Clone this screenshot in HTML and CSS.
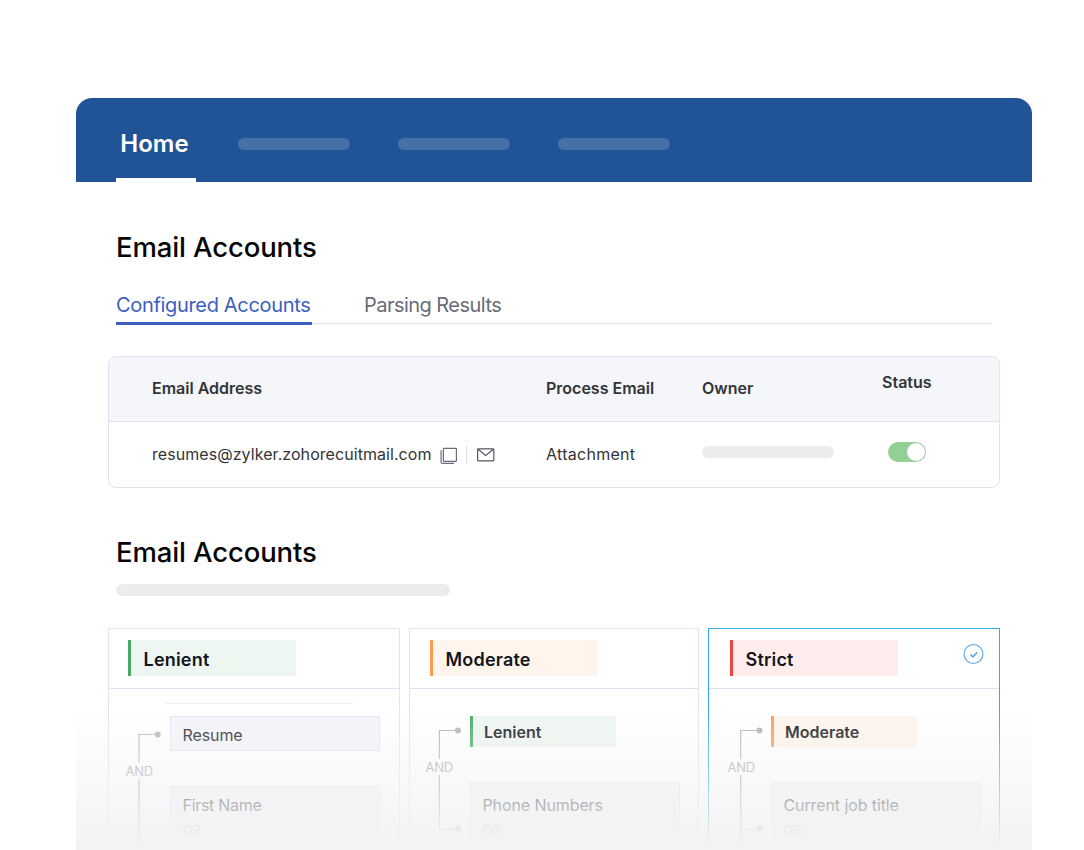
FILE: index.html
```html
<!DOCTYPE html>
<html lang="en">
<head>
  <meta charset="UTF-8">
  <title>Email Accounts</title>
  <link rel="stylesheet" href="styles.css">
</head>
<body>

<div class="window">
  <nav class="navbar">
    <a class="nav-item">Home</a>
    <span class="nav-bar"></span>
    <span class="nav-bar"></span>
    <span class="nav-bar"></span>
  </nav>

  <main class="content">
    <h1 class="title">Email Accounts</h1>

    <div class="tabs">
      <a class="tab active">Configured Accounts</a>
      <a class="tab parsing">Parsing Results</a>
    </div>

    <div class="table">
      <div class="row head">
        <span>Email Address</span>
        <span>Process Email</span>
        <span>Owner</span>
        <span class="th-status">Status</span>
      </div>
      <div class="row">
        <div class="address">
          <span class="mail">resumes@zylker.zohorecuitmail.com</span>
          <svg class="copy-icon" width="18" height="18" viewBox="0 0 18 18" fill="none" stroke="#6b6d7c" stroke-width="1.2">
            <rect x="3.4" y="1.4" width="13" height="13" rx="0.6"/>
            <path d="M1.1 3.3v11.9a1.2 1.2 0 0 0 1.2 1.2h11.8"/>
          </svg>
          <span class="divider"></span>
          <svg class="mail-icon" width="18" height="14" viewBox="0 0 18 14" fill="none" stroke="#555765" stroke-width="1.2">
            <rect x="0.6" y="0.8" width="16.2" height="12" rx="0.8"/>
            <path d="M1 1.2L8.7 7.4l7.7-6.2"/>
          </svg>
        </div>
        <span class="attachment">Attachment</span>
        <span class="placeholder owner"></span>
        <span class="toggle"></span>
      </div>
    </div>

    <h2 class="title second">Email Accounts</h2>
    <div class="placeholder subtitle"></div>

    <div class="cards">
      <section class="card lenient-card">
        <header class="card-head"><span class="tag green">Lenient</span></header>
        <div class="rule"></div>
        <div class="card-body">
          <div class="tree">
            <svg width="24" height="32" viewBox="0 0 24 32"><path d="M1 32V3.5H20" fill="none" stroke="#b9babd" stroke-width="1.2"/><circle cx="19.7" cy="3.5" r="3" fill="#b9babd"/></svg>
            <span class="and">AND</span>
            <svg width="24" height="80" viewBox="0 0 24 80"><path d="M1 0V80" fill="none" stroke="#a5a6aa" stroke-width="1.2"/></svg>
          </div>
          <div class="fields">
            <div class="field">Resume</div>
            <div class="field group first-name">First Name<span class="or">OR</span>Last Name</div>
          </div>
        </div>
      </section>

      <section class="card moderate-card">
        <header class="card-head"><span class="tag orange">Moderate</span></header>
        <div class="card-body">
          <div class="tree">
            <svg width="24" height="32" viewBox="0 0 24 32"><path d="M1.4 32V3.5H20" fill="none" stroke="#b3b4b7" stroke-width="1.2"/><circle cx="20" cy="3.5" r="3" fill="#b3b4b7"/></svg>
            <span class="and">AND</span>
            <svg width="24" height="75" viewBox="0 0 24 75"><path d="M1.4 0V54.5H20" fill="none" stroke="#a5a6aa" stroke-width="1.2"/><circle cx="20" cy="53.7" r="3" fill="#a5a6aa"/></svg>
          </div>
          <div class="fields">
            <span class="tag small green">Lenient</span>
            <div class="field group">Phone Numbers<span class="or">OR</span>Email</div>
          </div>
        </div>
      </section>

      <section class="card strict-card">
        <header class="card-head">
          <span class="tag red">Strict</span>
          <svg class="check" width="22" height="22" viewBox="0 0 22 22" fill="none" stroke="#57a6e4">
            <circle cx="11.5" cy="11" r="9.5" stroke-width="1.1"/>
            <path d="M8.5 11.6l2.5 2.3 4.3-4.7" stroke-width="1.6"/>
          </svg>
        </header>
        <div class="card-body">
          <div class="tree">
            <svg width="24" height="32" viewBox="0 0 24 32"><path d="M0.7 32V3.5H20" fill="none" stroke="#b3b4b7" stroke-width="1.2"/><circle cx="19.5" cy="3.5" r="3" fill="#b3b4b7"/></svg>
            <span class="and">AND</span>
            <svg width="24" height="80" viewBox="0 0 24 80"><path d="M0.7 0V80M0.7 54.5H20" fill="none" stroke="#a5a6aa" stroke-width="1.2"/><circle cx="19.5" cy="53.7" r="3" fill="#a5a6aa"/></svg>
          </div>
          <div class="fields">
            <span class="tag small orange">Moderate</span>
            <div class="field group">Current job title<span class="or">OR</span>Current Employer</div>
          </div>
        </div>
      </section>
    </div>
  </main>
  <div class="fade"></div>
</div>

</body>
</html>
```
FILE: styles.css
```css
* {
  box-sizing: border-box;
}
body {
  margin: 0;
  height: 850px;
  overflow: hidden;
  background: #fff;
  font-family: Inter, "Liberation Sans", sans-serif;
}
.window {
  position: relative;
  width: 956px;
  height: 752px;
  margin: 98px 0 0 76px;
  overflow: hidden;
  border-radius: 16px 16px 0 0;
}

/* top bar */
.navbar {
  display: flex;
  align-items: center;
  gap: 48px;
  height: 84px;
  padding: 0 40px;
  background: #205497;
}
.nav-item {
  width: 80px;
  height: 84px;
  margin-right: -6px;
  padding: 8px 3px 0 0;
  border-bottom: 4px solid #fff;
  color: #fff;
  font-size: 24px;
  font-weight: 600;
  line-height: 76px;
  text-align: center;
}
.nav-bar {
  width: 112px;
  height: 12px;
  margin-top: 8px;
  border-radius: 6px;
  background: #4570a8;
}

.content {
  padding: 45px 32px 0;
}
.title {
  margin: 0 0 0 8px;
  font-size: 27.5px;
  font-weight: 500;
  line-height: 40px;
  letter-spacing: -0.13px;
  color: #050505;
}

/* tabs */
.tabs {
  display: flex;
  gap: 52px;
  height: 34px;
  margin: 23px 8px 0;
  border-bottom: 1px solid #e0e2ec;
}
.tab {
  height: 35px;
  font-size: 20px;
  line-height: 30px;
  letter-spacing: -0.33px;
  color: #696b76;
  white-space: nowrap;
}
.tab.parsing {
  letter-spacing: -0.54px;
}
.tab.active {
  width: 196px;
  color: #3b5fc0;
  border-bottom: 3px solid #3b5fc0;
}

/* accounts table */
.table {
  margin-top: 32px;
  height: 132px;
  border: 1px solid #dfe3f0;
  border-radius: 8px;
  overflow: hidden;
}
.row {
  display: grid;
  grid-template-columns: 394px 156px 180px 1fr;
  align-items: center;
  height: 65px;
  padding-left: 43px;
  font-size: 16px;
  color: #333438;
}
.row.head {
  padding-bottom: 2px;
  background: #f4f6fa;
  border-bottom: 1px solid #dfe3f0;
  font-weight: 600;
}
.th-status {
  margin-top: -12px;
}
.address {
  display: flex;
  align-items: center;
}
.mail {
  width: 288px;
  margin-top: -2px;
  letter-spacing: 0.06px;
  white-space: nowrap;
}
.attachment {
  margin-top: -2px;
  letter-spacing: 0.28px;
}
.divider {
  width: 1px;
  height: 18px;
  margin: 0 10px 0 8px;
  background: #dedfe3;
}
.copy-icon {
  margin-top: 2px;
}
.placeholder {
  height: 12px;
  border-radius: 6px;
  background: #ececec;
}
.owner {
  width: 132px;
  margin-top: -5px;
}
.toggle {
  display: flex;
  justify-content: flex-end;
  width: 38px;
  height: 20px;
  margin: -5px 0 0 6px;
  padding: 1px;
  border-radius: 10px;
  background: #93d095;
}
.toggle::after {
  content: "";
  width: 18px;
  height: 18px;
  border-radius: 50%;
  background: #fff;
}

.second {
  margin-top: 44px;
}
.subtitle {
  width: 334px;
  margin: 12px 0 32px 8px;
}

/* parsing levels */
.cards {
  display: grid;
  grid-template-columns: 292px 290px 292px;
  gap: 9px;
}
.card {
  height: 260px;
  border: 1px solid #e1e4f3;
}
.card-head {
  display: flex;
  justify-content: space-between;
  height: 60px;
  padding: 11px 15px 0 19px;
  border-bottom: 1px solid #dde2f2;
}
.moderate-card .card-head {
  padding-left: 20px;
}
.strict-card {
  border-color: #2fabe2;
}
.strict-card .card-head {
  padding-left: 21px;
}
.tag {
  display: block;
  width: 168px;
  height: 36px;
  padding-left: 12.5px;
  border-left: 3px solid;
  font-size: 18px;
  font-weight: 600;
  line-height: 39px;
  letter-spacing: 0.2px;
  color: #13151d;
}
.tag.small {
  width: 146px;
  height: 31px;
  padding-left: 11px;
  font-size: 16px;
  line-height: 32px;
  letter-spacing: 0;
}
.green {
  border-color: #46aa62;
  background: #edf6f1;
}
.orange {
  border-color: #ff9b4a;
  background: #fff5ec;
}
.red {
  border-color: #f2423e;
  background: #ffeded;
}
.check {
  margin-top: 3px;
}
.rule {
  height: 1px;
  margin: 14px 46px -15px 56px;
  background: #f0f1f3;
}
.card-body {
  display: flex;
  padding: 27px 0 0 16px;
}
.tree {
  display: flex;
  flex-direction: column;
  width: 45px;
  padding-top: 11px;
}
.tree svg {
  flex: none;
  margin-left: 13px;
}
.lenient-card .tree {
  padding-top: 15px;
}
.moderate-card .card-body {
  padding-left: 15px;
}
.strict-card .card-body {
  padding-left: 18px;
}
.strict-card .tree {
  width: 44px;
}
.and {
  height: 16px;
  padding-left: 0.5px;
  font-size: 13px;
  line-height: 16px;
  letter-spacing: -0.3px;
  color: #aaabaf;
}
.fields {
  width: 210px;
}
.field {
  height: 35px;
  padding-left: 11.5px;
  border: 1px solid #dfe6f3;
  background: #f3f5fa;
  font-size: 16px;
  line-height: 37px;
  letter-spacing: -0.1px;
  color: #25262b;
}
.field.group {
  height: 100px;
  margin-top: 35px;
  padding-top: 8px;
  line-height: 20px;
  border-color: #e4e6f0;
}
.field.first-name {
  letter-spacing: -0.3px;
}
.moderate-card .group,
.strict-card .group {
  padding-top: 12px;
}
.or {
  display: block;
  padding: 5px 0 3px;
  font-size: 13px;
  line-height: 20px;
  color: #9d9ea3;
}

.fade {
  position: absolute;
  left: 0;
  right: 0;
  bottom: 0;
  height: 145px;
  background: linear-gradient(rgba(243, 243, 243, 0), #f3f3f3 98%);
}
```
